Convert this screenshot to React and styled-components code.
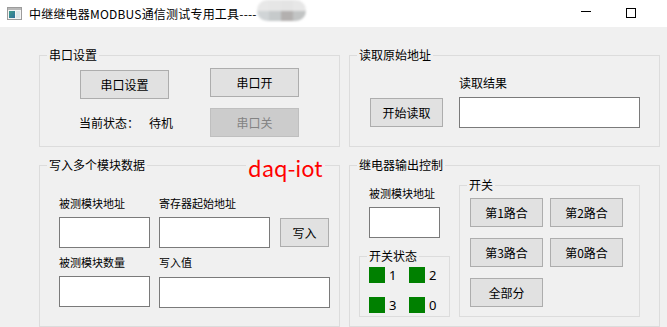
import React from 'react';
import styled, { createGlobalStyle } from 'styled-components';

const GlobalStyle = createGlobalStyle`
  html, body {
    margin: 0;
    padding: 0;
    background: #f0f0f0;
    overflow: hidden;
  }
  body {
    font-family: "Noto Sans CJK SC", "Noto Sans", sans-serif;
    font-size: 12px;
    color: #000;
  }
`;

const Window = styled.div`
  width: 667px;
  height: 327px;
  background: #f0f0f0;
  overflow: hidden;
`;

const TitleBar = styled.div`
  height: 27px;
  background: #ffffff;
  display: flex;
  align-items: center;
`;

const AppIcon = styled.svg`
  margin-left: 7px;
  flex-shrink: 0;
`;

const Title = styled.span`
  margin-left: 7px;
  font-size: 12px;
  line-height: 16px;
  letter-spacing: 0.2px;
  white-space: nowrap;
`;

const Mosaic = styled.div`
  align-self: flex-start;
  width: 49px;
  height: 21px;
  border-radius: 10px;
  overflow: hidden;
  display: grid;
  grid-template-columns: repeat(4, 1fr);
  grid-template-rows: 1fr 1fr;
  filter: blur(1.2px);
`;

const MosaicCell = styled.div`
  background: ${(p) => p.$c};
`;

const Spacer = styled.div`
  flex: 1;
`;

const Controls = styled.div`
  display: flex;
  margin-right: 14px;
  height: 27px;
`;

const CtrlButton = styled.div`
  width: 45px;
  height: 27px;
  display: flex;
  align-items: center;
  justify-content: center;
`;

const MinGlyph = styled.div`
  width: 10px;
  height: 1px;
  background: #000;
  margin-top: -4px;
`;

const MaxGlyph = styled.div`
  box-sizing: border-box;
  width: 10px;
  height: 10px;
  border: 1px solid #000;
  margin-top: -2px;
`;

const Content = styled.div`
  display: grid;
  grid-template-columns: 301px 311px;
  grid-template-rows: 92px 162px;
  column-gap: 9px;
  row-gap: 18px;
  padding: 28px 0 0 39px;
`;

const Group = styled.div`
  position: relative;
  box-sizing: border-box;
  border: 1px solid #dcdcdc;
  width: ${(p) => (p.$w ? `${p.$w}px` : 'auto')};
  height: ${(p) => (p.$h ? `${p.$h}px` : 'auto')};
`;

const Legend = styled.span`
  position: absolute;
  top: -9px;
  left: 7px;
  padding: 0 2px;
  background: #f0f0f0;
  font-size: 12px;
  line-height: 16px;
  white-space: nowrap;
`;

const Btn = styled.button`
  box-sizing: border-box;
  width: ${(p) => p.$w}px;
  height: 29px;
  margin: 0;
  padding: 0;
  background: #e1e1e1;
  border: 1px solid #adadad;
  font-family: "Noto Sans CJK SC", sans-serif;
  font-size: 12px;
  color: #000;

  &:disabled {
    background: #cccccc;
    border-color: #bfbfbf;
    color: #838383;
  }
`;

const Field = styled.input`
  box-sizing: border-box;
  width: ${(p) => p.$w}px;
  height: 31px;
  margin: 0;
  padding: 0 3px;
  background: #ffffff;
  border: 1px solid #7a7a7a;
  outline: none;
`;

const Caption = styled.div`
  font-size: ${(p) => p.$size || 12}px;
  line-height: 16px;
  white-space: nowrap;
`;

/* 串口设置 */
const SerialGrid = styled.div`
  display: grid;
  grid-template-columns: 131px 89px;
  grid-template-rows: 40px 29px;
  align-items: start;
  padding: 12px 0 0 39px;
`;

const StatusRow = styled.div`
  display: flex;
  align-items: center;
  height: 29px;
`;

const StatusLabel = styled.span`
  width: 70px;
`;

/* 读取原始地址 */
const ReadGrid = styled.div`
  display: grid;
  grid-template-columns: 73px 181px;
  grid-template-rows: 16px 31px;
  column-gap: 16px;
  row-gap: 6px;
  align-items: center;
  padding: 19px 0 0 20px;
`;

/* 写入多个模块数据 */
const WriteGrid = styled.div`
  display: grid;
  grid-template-columns: 91px 111px 49px;
  grid-template-rows: 16px 31px 16px 31px;
  column-gap: 9px;
  row-gap: 6px;
  align-items: center;
  padding: 29px 0 0 19px;
`;

const Wide = styled.div`
  grid-column: 2 / 4;
  margin-top: 1px;
`;

const Brand = styled.div`
  position: absolute;
  top: -12px;
  left: 206px;
  padding: 0 2px;
  background: #f0f0f0;
  color: #ff0000;
  font-family: "Noto Sans CJK SC", sans-serif;
  font-size: 22px;
  line-height: 26px;
`;

/* 继电器输出控制 */
const RelayBody = styled.div`
  display: flex;
  gap: 9px;
  padding: 19px 0 0 9px;
`;

const RelayLeft = styled.div`
  width: 91px;
  display: flex;
  flex-direction: column;
`;

const Indented = styled.div`
  margin-left: 10px;
  margin-bottom: ${(p) => p.$mb || 0}px;
`;

const LedGrid = styled.div`
  display: grid;
  grid-template-columns: 40px 40px;
  row-gap: 14px;
  padding: 10px 0 0 9px;
`;

const LedItem = styled.div`
  display: flex;
  align-items: center;
  gap: 4px;
  height: 16px;
`;

const Led = styled.div`
  width: 16px;
  height: 16px;
  background: ${(p) => (p.$on ? '#00ff00' : '#008000')};
`;

const LedText = styled.span`
  font-family: "Noto Sans", sans-serif;
  font-size: 13px;
  line-height: 16px;
`;

const SwitchGrid = styled.div`
  display: grid;
  grid-template-columns: 73px 73px;
  column-gap: 7px;
  row-gap: 11px;
  padding: 12px 0 0 10px;
`;

const mosaic = ['#e8e8e8', '#e6e6e6', '#e4e4e4', '#e7e7e7', '#d0d4d6', '#c6cacb', '#b3b0af', '#c2c4c4'];

export default function App() {
  return (
    <Window>
      <GlobalStyle />
      <TitleBar>
        <AppIcon width="15" height="13" viewBox="0 0 15 13">
          <rect x="0.5" y="0.5" width="14" height="12" fill="#f4f4f4" stroke="#9c9c9c" />
          <rect x="1" y="1" width="13" height="2" fill="#b8b8b8" />
          <defs>
            <linearGradient id="ic" x1="0" y1="0" x2="1" y2="1">
              <stop offset="0" stopColor="#3f9d8c" />
              <stop offset="1" stopColor="#2f6f9a" />
            </linearGradient>
          </defs>
          <rect x="2" y="4" width="6" height="7" fill="url(#ic)" />
          <rect x="9" y="4" width="4" height="7" fill="#dfe7ea" />
        </AppIcon>
        <Title>中继继电器MODBUS通信测试专用工具----</Title>
        <Mosaic>
          {mosaic.map((c, i) => (
            <MosaicCell key={i} $c={c} />
          ))}
        </Mosaic>
        <Spacer />
        <Controls>
          <CtrlButton>
            <MinGlyph />
          </CtrlButton>
          <CtrlButton>
            <MaxGlyph />
          </CtrlButton>
        </Controls>
      </TitleBar>

      <Content>
        <Group>
          <Legend>串口设置</Legend>
          <SerialGrid>
            <Btn $w={89} style={{ marginTop: 2, marginLeft: 1 }}>串口设置</Btn>
            <Btn $w={89}>串口开</Btn>
            <StatusRow>
              <StatusLabel>当前状态：</StatusLabel>
              <span>待机</span>
            </StatusRow>
            <Btn $w={89} disabled>串口关</Btn>
          </SerialGrid>
        </Group>

        <Group>
          <Legend>读取原始地址</Legend>
          <ReadGrid>
            <span />
            <Caption>读取结果</Caption>
            <Btn $w={73}>开始读取</Btn>
            <Field $w={181} />
          </ReadGrid>
        </Group>

        <Group>
          <Legend>写入多个模块数据</Legend>
          <Brand>daq-iot</Brand>
          <WriteGrid>
            <Caption $size={11}>被测模块地址</Caption>
            <Caption $size={11}>寄存器起始地址</Caption>
            <span />
            <Field $w={91} />
            <Field $w={111} />
            <Btn $w={49} style={{ marginLeft: 1 }}>写入</Btn>
            <Caption $size={11}>被测模块数量</Caption>
            <Caption $size={11}>写入值</Caption>
            <span />
            <Field $w={91} />
            <Wide>
              <Field $w={171} />
            </Wide>
          </WriteGrid>
        </Group>

        <Group>
          <Legend>继电器输出控制</Legend>
          <RelayBody>
            <RelayLeft>
              <Indented $mb={6}>
                <Caption $size={11}>被测模块地址</Caption>
              </Indented>
              <Indented $mb={18}>
                <Field $w={71} />
              </Indented>
              <Group $w={91} $h={61}>
                <Legend>开关状态</Legend>
                <LedGrid>
                  {['1', '2', '3', '0'].map((n) => (
                    <LedItem key={n}>
                      <Led />
                      <LedText>{n}</LedText>
                    </LedItem>
                  ))}
                </LedGrid>
              </Group>
            </RelayLeft>
            <Group $w={181} $h={132}>
              <Legend>开关</Legend>
              <SwitchGrid>
                <Btn $w={73}>第1路合</Btn>
                <Btn $w={73}>第2路合</Btn>
                <Btn $w={73}>第3路合</Btn>
                <Btn $w={73}>第0路合</Btn>
                <Btn $w={73}>全部分</Btn>
              </SwitchGrid>
            </Group>
          </RelayBody>
        </Group>
      </Content>
    </Window>
  );
}
